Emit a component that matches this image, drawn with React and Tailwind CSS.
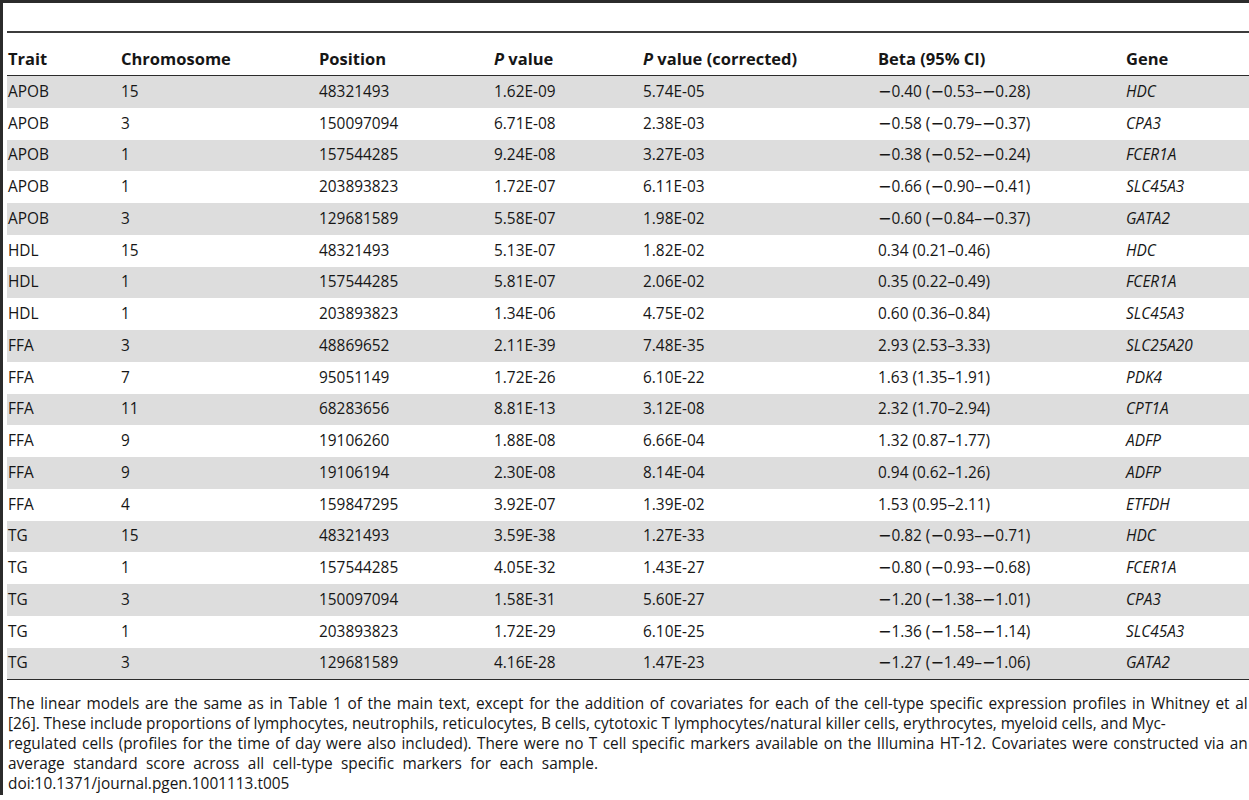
const rows = [
  ["APOB", "15", "48321493", "1.62E-09", "5.74E-05", "−0.40 (−0.53–−0.28)", "HDC"],
  ["APOB", "3", "150097094", "6.71E-08", "2.38E-03", "−0.58 (−0.79–−0.37)", "CPA3"],
  ["APOB", "1", "157544285", "9.24E-08", "3.27E-03", "−0.38 (−0.52–−0.24)", "FCER1A"],
  ["APOB", "1", "203893823", "1.72E-07", "6.11E-03", "−0.66 (−0.90–−0.41)", "SLC45A3"],
  ["APOB", "3", "129681589", "5.58E-07", "1.98E-02", "−0.60 (−0.84–−0.37)", "GATA2"],
  ["HDL", "15", "48321493", "5.13E-07", "1.82E-02", "0.34 (0.21–0.46)", "HDC"],
  ["HDL", "1", "157544285", "5.81E-07", "2.06E-02", "0.35 (0.22–0.49)", "FCER1A"],
  ["HDL", "1", "203893823", "1.34E-06", "4.75E-02", "0.60 (0.36–0.84)", "SLC45A3"],
  ["FFA", "3", "48869652", "2.11E-39", "7.48E-35", "2.93 (2.53–3.33)", "SLC25A20"],
  ["FFA", "7", "95051149", "1.72E-26", "6.10E-22", "1.63 (1.35–1.91)", "PDK4"],
  ["FFA", "11", "68283656", "8.81E-13", "3.12E-08", "2.32 (1.70–2.94)", "CPT1A"],
  ["FFA", "9", "19106260", "1.88E-08", "6.66E-04", "1.32 (0.87–1.77)", "ADFP"],
  ["FFA", "9", "19106194", "2.30E-08", "8.14E-04", "0.94 (0.62–1.26)", "ADFP"],
  ["FFA", "4", "159847295", "3.92E-07", "1.39E-02", "1.53 (0.95–2.11)", "ETFDH"],
  ["TG", "15", "48321493", "3.59E-38", "1.27E-33", "−0.82 (−0.93–−0.71)", "HDC"],
  ["TG", "1", "157544285", "4.05E-32", "1.43E-27", "−0.80 (−0.93–−0.68)", "FCER1A"],
  ["TG", "3", "150097094", "1.58E-31", "5.60E-27", "−1.20 (−1.38–−1.01)", "CPA3"],
  ["TG", "1", "203893823", "1.72E-29", "6.10E-25", "−1.36 (−1.58–−1.14)", "SLC45A3"],
  ["TG", "3", "129681589", "4.16E-28", "1.47E-23", "−1.27 (−1.49–−1.06)", "GATA2"],
];

const cols = "grid grid-cols-[113px_198px_175px_149px_235px_248px_1fr]";

function Beta({ text }) {
  const parts = text.split("−");
  return (
    <>
      {parts.map((p, k) => (
        <span key={k}>
          {k > 0 && <span className="font-['DejaVu_Sans',sans-serif] text-[16px]">−</span>}
          {p}
        </span>
      ))}
    </>
  );
}

function Spread({ text, className }) {
  return (
    <div className={`whitespace-nowrap flex justify-between ${className}`}>
      {text.split(" ").map((w, k) => (
        <span key={k}>{w}</span>
      ))}
    </div>
  );
}

export default function App() {
  return (
    <div className="w-[1249px] h-[800px] bg-white text-[#161616] font-['Open_Sans','Noto_Sans',sans-serif]">
      <div className="h-[795px] border-t-[3px] border-l-[3px] border-[#2b2b2b] pl-[4px]">
        <div className="h-[28px]" />
        <div className="border-t-2 border-[#3c3c3c]" />
        <div className={`${cols} h-[42px] items-end pb-[6px] text-[16.5px] font-bold leading-[20px]`}>
          <div className="pl-[1px]">Trait</div>
          <div className="pl-[1px]">Chromosome</div>
          <div className="pl-[1px]">Position</div>
          <div className="pl-[1px]"><i>P</i> value</div>
          <div className="pl-[1px]"><i>P</i> value (corrected)</div>
          <div className="pl-[1px]">Beta (95% CI)</div>
          <div className="pl-[1px]">Gene</div>
        </div>
        <div className="border-t border-[#2b2b2b]" />
        <div className="text-[15.4px]">
          {rows.map((r, i) => (
            <div
              key={i}
              className={`${cols} h-[31.75px] items-center ${i % 2 === 0 ? "bg-[#dddddd]" : "bg-white"}`}
            >
              {r.map((c, j) => (
                <div key={j} className={`pl-[1px] whitespace-nowrap leading-[20px] ${j === 6 ? "italic" : ""}`}>
                  {j === 5 ? <Beta text={c} /> : c}
                </div>
              ))}
            </div>
          ))}
        </div>
        <div className="border-t border-[#2b2b2b]" />
        <div className="pt-[14px] text-[15.4px] leading-[20px] pl-[1px]">
          <Spread
            className="w-[1240px]"
            text="The linear models are the same as in Table 1 of the main text, except for the addition of covariates for each of the cell-type specific expression profiles in Whitney et al"
          />
          <Spread
            className="w-[1158px]"
            text="[26]. These include proportions of lymphocytes, neutrophils, reticulocytes, B cells, cytotoxic T lymphocytes/natural killer cells, erythrocytes, myeloid cells, and Myc-"
          />
          <Spread
            className="w-[1240px]"
            text="regulated cells (profiles for the time of day were also included). There were no T cell specific markers available on the Illumina HT-12. Covariates were constructed via an"
          />
          <Spread
            className="w-[590px]"
            text="average standard score across all cell-type specific markers for each sample."
          />
          <div className="whitespace-nowrap">doi:10.1371/journal.pgen.1001113.t005</div>
        </div>
      </div>
    </div>
  );
}
